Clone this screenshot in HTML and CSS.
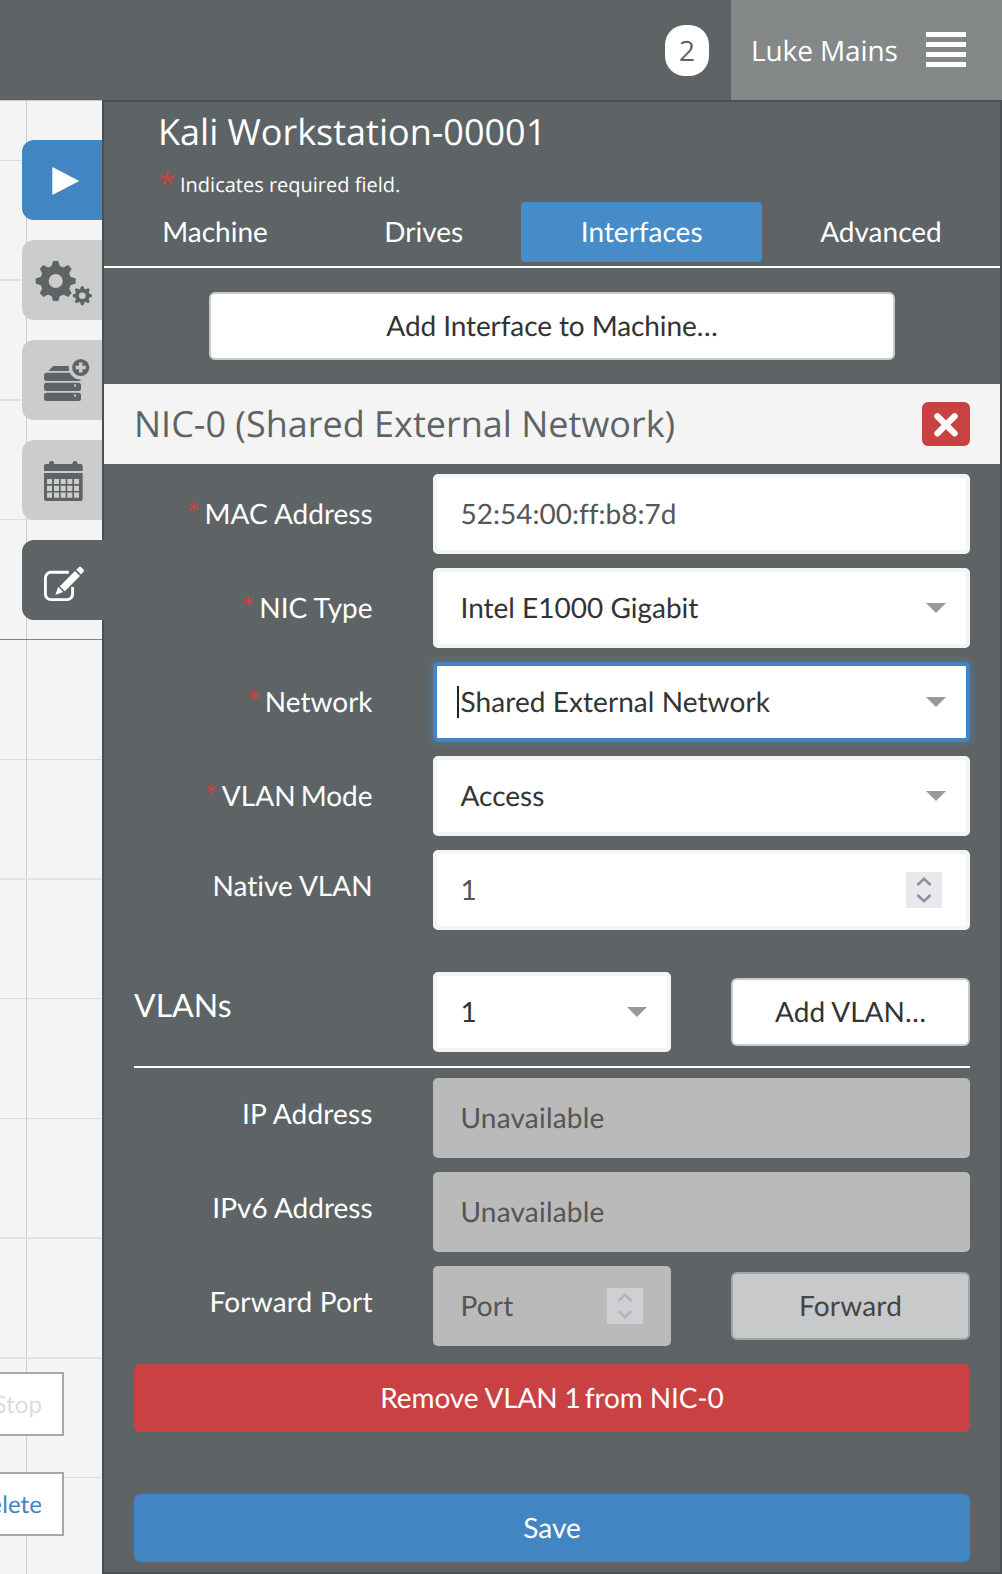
FILE: index.html
```html
<!DOCTYPE html>
<html lang="en">
<head>
<meta charset="utf-8">
<title>Kali Workstation-00001</title>
<link rel="stylesheet" href="styles.css">
</head>
<body>
<header class="topbar">
  <span class="badge">2</span>
  <div class="user">
    <span class="user-name">Luke Mains</span>
    <span class="menu"><i></i><i></i><i></i><i></i></span>
  </div>
</header>
<main class="workspace">
  <div class="canvas">
    <svg class="grid" width="102" height="1474" viewBox="0 0 102 1474">
      <rect x="0" y="0" width="102" height="1" fill="#c4c5c5"/>
      <rect x="26" y="0" width="1" height="1474" fill="#ccc"/>
      <g fill="#dcdcdc">
        <rect y="60" width="102" height="1"/>
        <rect y="179" width="102" height="2" fill="#e2e2e2"/>
        <rect y="299" width="102" height="2" fill="#e2e2e2"/>
        <rect y="419" width="102" height="1"/>
        <rect y="539" width="102" height="1" fill="#808283"/>
        <rect y="659" width="102" height="1"/>
        <rect y="778" width="102" height="2" fill="#e2e2e2"/>
        <rect y="898" width="102" height="1"/>
        <rect y="1018" width="102" height="1"/>
        <rect y="1137" width="102" height="2" fill="#e2e2e2"/>
        <rect y="1257" width="102" height="2" fill="#e2e2e2"/>
        <rect y="1377" width="102" height="1"/>
      </g>
    </svg>
    <nav class="tools">
      <a class="tool tool-run"><svg width="80" height="80"><path d="M30.3 27L57.3 40.9L30.3 55Z" fill="#fff"/></svg></a>
      <a class="tool">
        <svg width="80" height="80">
          <defs>
            <g id="gear">
              <circle r="11.2" fill="none" stroke="#5e6466" stroke-width="8.4"/>
              <g id="teeth" fill="#5e6466">
                <path id="pair" d="M-4.5-14L-2.6-20H2.6L4.5-14ZM-4.5 14L-2.6 20H2.6L4.5 14Z"/>
                <use href="#pair" transform="rotate(45)"/>
                <use href="#pair" transform="rotate(90)"/>
                <use href="#pair" transform="rotate(135)"/>
              </g>
            </g>
          </defs>
          <use href="#gear" transform="translate(33.7 41)"/>
          <use href="#gear" transform="translate(60.3 55.7) scale(.475)"/>
        </svg>
      </a>
      <a class="tool">
        <svg width="80" height="80" fill="#5e6466">
          <path d="M31.3 26H50V31H26.3Z"/>
          <rect x="22" y="32.7" width="37" height="8.3" rx="2.5"/>
          <rect x="22" y="42.7" width="37" height="8.3" rx="2.5"/>
          <rect x="22" y="52.7" width="37" height="8.3" rx="2.5"/>
          <rect x="52" y="44.5" width="2" height="2" fill="#ccc"/>
          <rect x="52" y="54.5" width="2" height="2" fill="#ccc"/>
          <circle cx="58.7" cy="27.5" r="12" fill="#ccc"/>
          <circle cx="58.7" cy="27.5" r="8.6"/>
          <path d="M57 22.5h3.4v3.3h3.3v3.4h-3.3v3.3H57v-3.3h-3.3v-3.4H57Z" fill="#ccc"/>
        </svg>
      </a>
      <a class="tool">
        <svg width="80" height="80" fill="#5e6466">
          <rect x="27" y="21" width="5" height="8" rx="2.3"/>
          <rect x="50.5" y="21" width="5" height="8" rx="2.3"/>
          <path d="M24 24H58.7a2 2 0 0 1 2 2V31H22V26a2 2 0 0 1 2-2ZM22 33H60.7V59a2 2 0 0 1-2 2H24a2 2 0 0 1-2-2Z"/>
          <path d="M25 39h5v5h-5zM32 39h5v5h-5zM38.7 39h5v5h-5zM45.3 39h5v5h-5zM52 39h5v5h-5zM25 45.7h5v5.3h-5zM32 45.7h5v5.3h-5zM38.7 45.7h5v5.3h-5zM45.3 45.7h5v5.3h-5zM52 45.7h5v5.3h-5zM25 52.5h5v5.2h-5zM32 52.5h5v5.2h-5zM38.7 52.5h5v5.2h-5zM45.3 52.5h5v5.2h-5zM52 52.5h5v5.2h-5z" fill="#ccc"/>
        </svg>
      </a>
      <a class="tool tool-active">
        <svg width="80" height="80" fill="#fff">
          <path d="M46.8 32.3H29a5.6 5.6 0 0 0-5.6 5.6V54a5.6 5.6 0 0 0 5.6 5.6H45a5.6 5.6 0 0 0 5.6-5.6V47" fill="none" stroke="#fff" stroke-width="2.9"/>
          <path d="M33.3 55L36.2 46.8L41.2 52ZM37.8 46.2L53 31L58 36L42.8 51.2ZM54.3 29.7L57 27Q58 26 59 27L61.7 29.7Q62.5 30.6 61.7 31.6L59 34.4Z"/>
        </svg>
      </a>
    </nav>
    <div class="vm-actions">
      <button class="vm-btn vm-btn-off">Stop</button>
      <button class="vm-btn">Delete</button>
    </div>
  </div>
  <section class="panel">
    <h1 class="title">Kali Workstation-00001</h1>
    <p class="hint"><span class="hint-star">*</span>Indicates required field.</p>
    <nav class="tabs">
      <a class="tab">Machine</a>
      <a class="tab">Drives</a>
      <a class="tab tab-on">Interfaces</a>
      <a class="tab">Advanced</a>
    </nav>
    <button class="btn add-interface">Add Interface to Machine…</button>
    <div class="nic-head">
      <h2 class="nic-title">NIC-0 (Shared External Network)</h2>
      <button class="close"><svg width="48" height="44"><path d="M15.4 14.2L32.6 31.4M32.6 14.2L15.4 31.4" stroke="#fff" stroke-width="6.2" stroke-linecap="round"/></svg></button>
    </div>
    <form class="form">
      <div class="row"><label class="label"><span class="star">*</span>MAC Address</label><div class="input muted wide">52:54:00:ff:b8:7d</div></div>
      <div class="row"><label class="label"><span class="star">*</span>NIC Type</label><div class="input wide">Intel E1000 Gigabit<i class="caret"></i></div></div>
      <div class="row"><label class="label"><span class="star">*</span>Network</label><div class="input wide focus">Shared External Network<i class="caret"></i></div></div>
      <div class="row"><label class="label label-mode"><span class="star">*</span>VLAN Mode</label><div class="input wide">Access<i class="caret"></i></div></div>
      <div class="row"><label class="label label-plain">Native VLAN</label><div class="input muted wide">1<svg class="spin" width="36" height="36"><path d="M11.5 13L18 6.8L24.5 13M11.5 23L18 29.2L24.5 23" fill="none" stroke="#8f8f9d" stroke-width="2.6"/></svg></div></div>
      <div class="row vlans"><h3 class="vlans-title">VLANs</h3><div class="input">1<i class="caret"></i></div><button class="btn" type="button">Add VLAN…</button></div>
      <div class="row"><label class="label label-plain loose">IP Address</label><div class="input disabled wide">Unavailable</div></div>
      <div class="row"><label class="label label-plain">IPv6 Address</label><div class="input disabled wide">Unavailable</div></div>
      <div class="row"><label class="label label-plain loose">Forward Port</label><div class="input disabled">Port<svg class="spin spin-off" width="36" height="36"><path d="M11.5 13L18 6.8L24.5 13M11.5 23L18 29.2L24.5 23" fill="none" stroke="#b3b3bb" stroke-width="2.6"/></svg></div><button class="btn btn-off" type="button">Forward</button></div>
      <button class="btn btn-danger" type="button">Remove VLAN 1<span class="tight"> </span>from NIC-0</button>
      <button class="btn btn-save" type="button">Save</button>
    </form>
  </section>
</main>
</body>
</html>
```
FILE: styles.css
```css
* { box-sizing: border-box; }

body {
  margin: 0;
  width: 1002px;
  height: 1574px;
  overflow: hidden;
  background: #f4f4f4;
  color: #fff;
  font: 28px/40px Lato, sans-serif;
  font-variant-ligatures: no-common-ligatures;
  text-rendering: geometricPrecision;
}

h1, h2, h3, p { margin: 0; font-weight: 400; }

button { margin: 0; padding: 0; font: inherit; font-variant-ligatures: inherit; text-rendering: inherit; }

svg { display: block; }

.topbar {
  display: flex;
  justify-content: flex-end;
  align-items: center;
  gap: 22px;
  height: 100px;
  background: #5e6466;
  font-family: "Open Sans", sans-serif;
}

.badge {
  width: 44px;
  height: 51px;
  margin-top: 1px;
  border-radius: 20px;
  background: #fff;
  color: #5e6466;
  line-height: 52px;
  text-align: center;
}

.user {
  display: flex;
  align-items: center;
  justify-content: space-between;
  width: 271px;
  height: 100px;
  padding: 0 36px 0 20px;
  background: #848888;
}
.user-name { padding-top: 2px; letter-spacing: -.1px; }

.menu { display: grid; gap: 5px; width: 40px; margin-top: -1px; }
.menu i { height: 5px; background: #fff; }

.workspace { display: flex; height: 1474px; }

.canvas {
  position: relative;
  display: flex;
  flex-direction: column;
  justify-content: space-between;
  width: 102px;
  padding: 40px 0 38px;
}

.grid { position: absolute; inset: 0; }

.tools {
  position: relative;
  z-index: 1;
  display: grid;
  grid-template-columns: 80px;
  gap: 20px;
  padding-left: 22px;
}

.tool { height: 80px; border-radius: 12px 0 0 12px; background: #ccc; }
.tool-run { background: #4185c2; }
.tool-active { width: 82px; background: #5e6466; }

.vm-actions { position: relative; display: grid; justify-content: start; gap: 36px; }

.vm-btn {
  display: flex;
  justify-content: flex-end;
  align-items: center;
  width: 124px;
  height: 64px;
  margin-left: -60px;
  padding: 2px 20px 0 0;
  border: 2px solid #a8a8a8;
  background: #fff;
  color: #4185c2;
  font-size: 24px;
  letter-spacing: .1px;
}
.vm-btn-off { color: #dcdcdc; }

.panel {
  width: 900px;
  border: 2px solid #4b4f52;
  background: #5e6466;
}

.title { padding: 5px 0 0 54px; font: 36px/50px "Open Sans", sans-serif; }

.hint {
  display: flex;
  height: 45px;
  padding-left: 54px;
  font: 20px/56px "Open Sans", sans-serif;
}
.hint-star { width: 22px; color: #c94143; font-size: 32px; line-height: 54px; }

.tabs { display: flex; height: 66px; padding-bottom: 4px; border-bottom: 2px solid #fff; }

.tab { flex: 1 1 auto; border-radius: 4px; line-height: 58px; text-align: center; }
.tab-on { flex-basis: 124px; background: #468cc9; }

.btn {
  height: 68px;
  padding-bottom: 2px;
  border: 2px solid #c8c9ca;
  border-radius: 6px;
  background: #fff;
  color: #333;
}

.add-interface { display: block; width: 686px; margin: 24px 0 24px 105px; letter-spacing: -.09px; }

.nic-head {
  display: flex;
  align-items: center;
  justify-content: space-between;
  height: 80px;
  padding: 0 30px;
  background: #f4f4f4;
  color: #5e6466;
}
.nic-title { font: 36px/80px "Open Sans", sans-serif; }

.close { width: 48px; height: 44px; border: 0; border-radius: 6px; background: #c94143; }

.form { display: grid; row-gap: 14px; padding: 10px 30px 0; }

.row {
  display: grid;
  grid-template-columns: 238px 238px 239px;
  column-gap: 60.5px;
  align-items: center;
  height: 80px;
}

.label { margin-right: -.6px; padding-bottom: 2px; text-align: right; }
.label-plain { padding-bottom: 10px; }
.label-mode { word-spacing: -2px; }
.loose { letter-spacing: .17px; }

.star {
  margin-right: 4px;
  color: #c94143;
  font-size: 34px;
  line-height: 0;
  vertical-align: -3px;
}

.input {
  position: relative;
  display: flex;
  align-items: center;
  justify-content: space-between;
  height: 80px;
  padding: 0 24px 2px;
  border: 4px solid #f4f4f4;
  border-radius: 5px;
  background: #fff;
  color: #333;
  line-height: 40px;
}
.wide { grid-column: 2 / 4; }
.muted { color: #555; }
.disabled { border-color: #bababa; background: #bababa; color: #555; letter-spacing: .2px; }

.focus {
  border-color: #4185c2;
  box-shadow: 0 0 0 5px rgba(65, 133, 194, .18);
  letter-spacing: .07px;
}
.focus::before {
  content: "";
  position: absolute;
  left: 20px;
  top: 20px;
  width: 2px;
  height: 32px;
  background: #222;
}

.caret {
  margin: 2px -4px 0 0;
  border: solid transparent;
  border-width: 10px 10px 0;
  border-top-color: #999;
}

.spin { margin-top: 2px; background: #e9e8ed; }
.spin-off { background: #d0d0d3; }

.vlans {
  height: 124px;
  margin-bottom: -4px;
  padding-top: 28px;
  padding-bottom: 14px;
  border-bottom: 2px solid #fff;
}
.vlans-title { padding-bottom: 14px; font-size: 32px; }

.btn-off { border-color: #a3a5a7; background: #c8c9cb; color: #444; letter-spacing: .2px; }
.btn-danger { margin-top: 4px; border: 0; background: #c94143; color: #fff; letter-spacing: -.13px; }
.tight { letter-spacing: -3px; }
.btn-save { margin-top: 48px; border: 0; background: #4185c2; color: #fff; }
```
